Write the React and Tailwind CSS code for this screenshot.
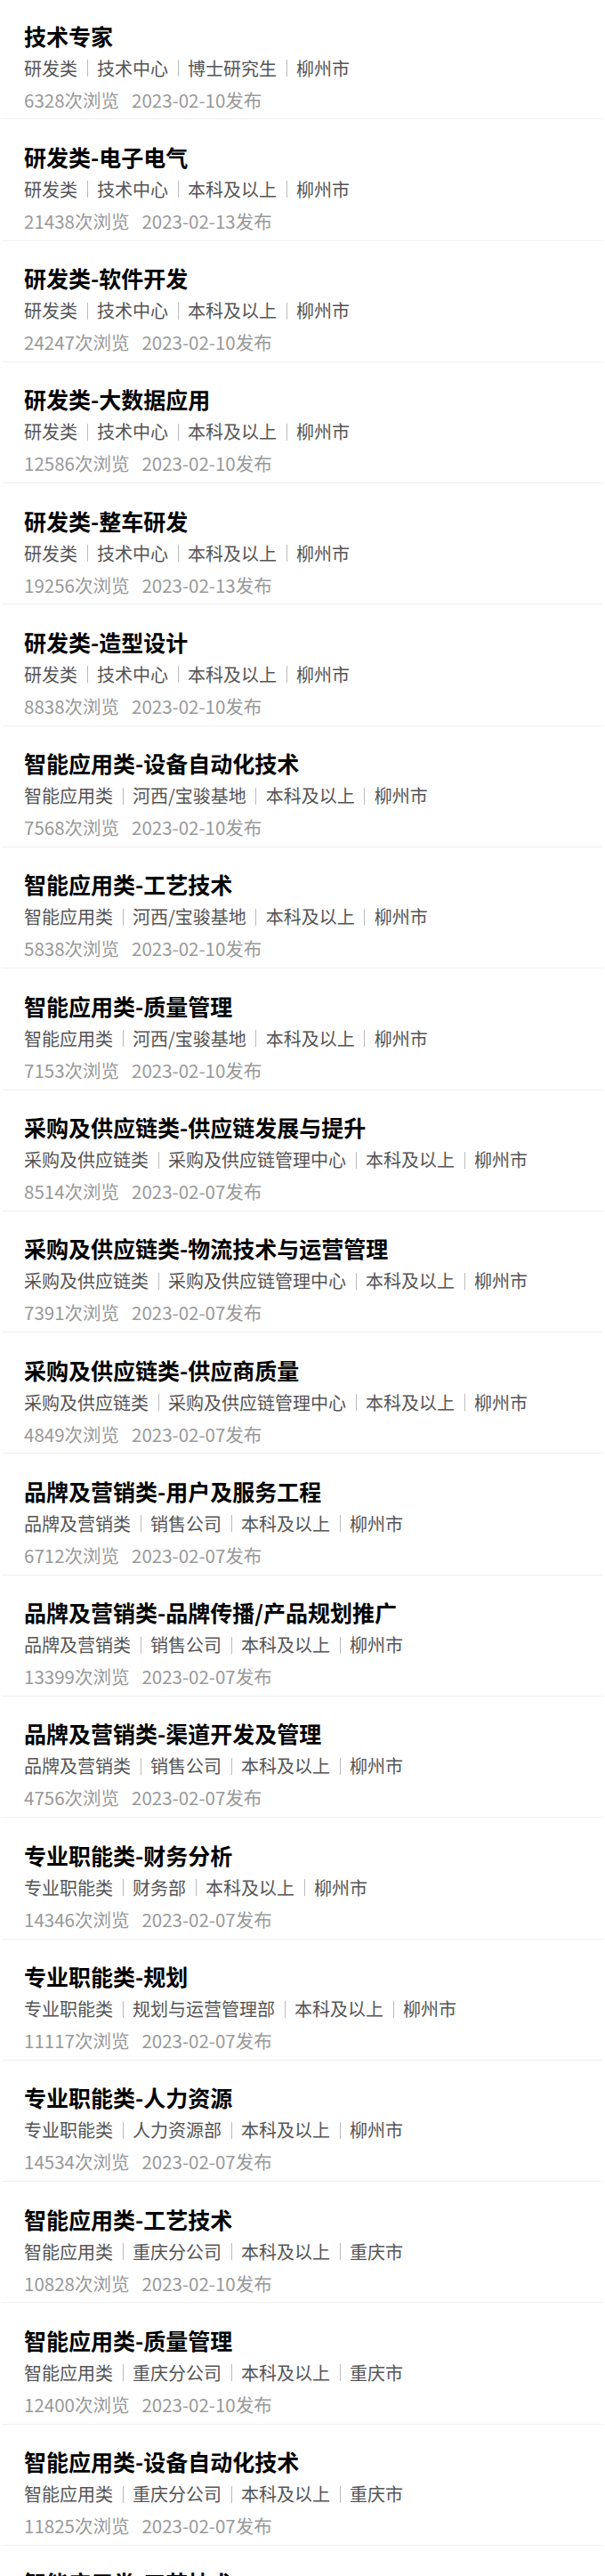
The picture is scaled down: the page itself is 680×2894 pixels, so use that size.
const jobs = [
  { title: '技术专家', tags: ['研发类', '技术中心', '博士研究生', '柳州市'], views: 6328, date: '2023-02-10' },
  { title: '研发类-电子电气', tags: ['研发类', '技术中心', '本科及以上', '柳州市'], views: 21438, date: '2023-02-13' },
  { title: '研发类-软件开发', tags: ['研发类', '技术中心', '本科及以上', '柳州市'], views: 24247, date: '2023-02-10' },
  { title: '研发类-大数据应用', tags: ['研发类', '技术中心', '本科及以上', '柳州市'], views: 12586, date: '2023-02-10' },
  { title: '研发类-整车研发', tags: ['研发类', '技术中心', '本科及以上', '柳州市'], views: 19256, date: '2023-02-13' },
  { title: '研发类-造型设计', tags: ['研发类', '技术中心', '本科及以上', '柳州市'], views: 8838, date: '2023-02-10' },
  { title: '智能应用类-设备自动化技术', tags: ['智能应用类', '河西/宝骏基地', '本科及以上', '柳州市'], views: 7568, date: '2023-02-10' },
  { title: '智能应用类-工艺技术', tags: ['智能应用类', '河西/宝骏基地', '本科及以上', '柳州市'], views: 5838, date: '2023-02-10' },
  { title: '智能应用类-质量管理', tags: ['智能应用类', '河西/宝骏基地', '本科及以上', '柳州市'], views: 7153, date: '2023-02-10' },
  { title: '采购及供应链类-供应链发展与提升', tags: ['采购及供应链类', '采购及供应链管理中心', '本科及以上', '柳州市'], views: 8514, date: '2023-02-07' },
  { title: '采购及供应链类-物流技术与运营管理', tags: ['采购及供应链类', '采购及供应链管理中心', '本科及以上', '柳州市'], views: 7391, date: '2023-02-07' },
  { title: '采购及供应链类-供应商质量', tags: ['采购及供应链类', '采购及供应链管理中心', '本科及以上', '柳州市'], views: 4849, date: '2023-02-07' },
  { title: '品牌及营销类-用户及服务工程', tags: ['品牌及营销类', '销售公司', '本科及以上', '柳州市'], views: 6712, date: '2023-02-07' },
  { title: '品牌及营销类-品牌传播/产品规划推广', tags: ['品牌及营销类', '销售公司', '本科及以上', '柳州市'], views: 13399, date: '2023-02-07' },
  { title: '品牌及营销类-渠道开发及管理', tags: ['品牌及营销类', '销售公司', '本科及以上', '柳州市'], views: 4756, date: '2023-02-07' },
  { title: '专业职能类-财务分析', tags: ['专业职能类', '财务部', '本科及以上', '柳州市'], views: 14346, date: '2023-02-07' },
  { title: '专业职能类-规划', tags: ['专业职能类', '规划与运营管理部', '本科及以上', '柳州市'], views: 11117, date: '2023-02-07' },
  { title: '专业职能类-人力资源', tags: ['专业职能类', '人力资源部', '本科及以上', '柳州市'], views: 14534, date: '2023-02-07' },
  { title: '智能应用类-工艺技术', tags: ['智能应用类', '重庆分公司', '本科及以上', '重庆市'], views: 10828, date: '2023-02-10' },
  { title: '智能应用类-质量管理', tags: ['智能应用类', '重庆分公司', '本科及以上', '重庆市'], views: 12400, date: '2023-02-10' },
  { title: '智能应用类-设备自动化技术', tags: ['智能应用类', '重庆分公司', '本科及以上', '重庆市'], views: 11825, date: '2023-02-07' },
  { title: '智能应用类-工艺技术', tags: ['智能应用类', '重庆分公司', '本科及以上', '重庆市'], views: 9632, date: '2023-02-10' },
];

function JobItem({ job }) {
  return (
    <li className="mx-[2px] mb-[2px] border-b border-[#f0f0f0] px-[25px] pt-[21.5px] pb-[5.2px]">
      <h3 className="text-[25px] leading-[36px] font-bold text-black whitespace-nowrap">{job.title}</h3>
      <div className="flex items-center text-[20px] leading-[38px] text-[#555] whitespace-nowrap">
        {job.tags.map((t, i) => (
          <span key={i} className="flex items-center">
            {i > 0 && <span className="mx-[10.5px] inline-block h-[19px] w-px bg-[#bbb]" />}
            {t}
          </span>
        ))}
      </div>
      <div className="text-[20.5px] leading-[32.6px] text-[#999] whitespace-nowrap">
        <span>{job.views}次浏览</span>
        <span className="ml-[14px]">{job.date}发布</span>
      </div>
    </li>
  );
}

export default function App() {
  return (
    <div className="min-h-screen bg-white font-['Noto_Sans_CJK_SC',sans-serif] overflow-hidden">
      {/* job list */}
      <ul>
        {jobs.map((job, i) => (
          <JobItem key={i} job={job} />
        ))}
      </ul>
    </div>
  );
}
